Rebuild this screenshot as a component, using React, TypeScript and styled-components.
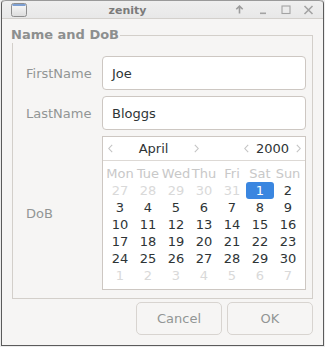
import React from "react";
import styled, { createGlobalStyle } from "styled-components";

const Global = createGlobalStyle`
  html, body { margin: 0; padding: 0; background: #ececec; }
  body { font-family: "DejaVu Sans", "Noto Sans", sans-serif; font-size: 13px; }
  * { box-sizing: border-box; }
`;

const Window = styled.div`
  margin-left: 1px;
  width: 323px;
  height: 346px;
  background: #f6f5f4;
  border: 1px solid #5b5b5b;
  border-top: none;
  border-radius: 4px 4px 0 0;
  display: flex;
  flex-direction: column;
  overflow: hidden;
`;

const TitleBar = styled.div`
  height: 19px;
  flex: none;
  display: flex;
  align-items: center;
  background: linear-gradient(#efefef, #e8e8e8);
  border-bottom: 1px solid #d3d0cc;
  border-top: 1px solid #9a9a9a;
  border-radius: 4px 4px 0 0;
  padding: 0 0 0 9px;
`;

const Title = styled.div`
  flex: 1;
  text-align: center;
  font-size: 11px;
  font-weight: bold;
  color: #7b7b7b;
  padding-top: 1px;
`;

const TitleButtons = styled.div`
  display: flex;
  align-items: center;
  height: 100%;
  padding-right: 3px;
`;

const TitleButton = styled.div`
  width: 23px;
  height: 17px;
  display: flex;
  align-items: center;
  justify-content: center;
`;

const Content = styled.div`
  flex: 1;
  display: flex;
  flex-direction: column;
  padding: 8px 10px 10px 10px;
`;

const Frame = styled.fieldset`
  margin: 0;
  padding: 0;
  border: 1px solid #d3cfca;
  width: 301px;
  min-width: 0;
`;

const Legend = styled.legend`
  padding: 0 1px 0 0;
  margin-left: -2px;
  font-weight: bold;
  font-size: 13px;
  line-height: 16px;
  color: #8d8f8f;
`;

const Form = styled.div`
  display: grid;
  grid-template-columns: 76px 204px;
  row-gap: 6px;
  align-items: center;
  padding: 13px 6px 8px 13px;
`;

const Label = styled.div`
  color: #929595;
  font-size: 13px;
`;

const Entry = styled.div`
  height: 34px;
  background: #ffffff;
  border: 1px solid #cdc7c2;
  border-radius: 4px;
  display: flex;
  align-items: center;
  padding-left: 9px;
  color: #2e3436;
  font-size: 13px;
`;

const Calendar = styled.div`
  height: 154px;
  background: #ffffff;
  border: 1px solid #cdc7c2;
  display: flex;
  flex-direction: column;
`;

const CalHeader = styled.div`
  height: 24px;
  flex: none;
  border-bottom: 1px solid #ddd9d5;
  display: flex;
  align-items: center;
  padding: 0 4px 0 5px;
  color: #2e3436;
`;

const MonthNav = styled.div`
  width: 91px;
  display: flex;
  justify-content: space-between;
  align-items: center;
`;

const YearNav = styled.div`
  margin-left: auto;
  display: flex;
  align-items: center;
  gap: 7px;
`;

const NavText = styled.span`
  font-size: 13px;
  color: #2e3436;
`;

const Grid = styled.div`
  display: grid;
  grid-template-columns: repeat(7, 28px);
  grid-auto-rows: 17.15px;
  padding: 3.5px 3px 0 3px;
`;

const Cell = styled.div<{ $kind: "head" | "other" | "day" | "sel" }>`
  display: flex;
  align-items: center;
  justify-content: center;
  font-size: 13px;
  border-radius: 3px;
  color: ${(p) =>
    p.$kind === "head"
      ? "#c8c8c8"
      : p.$kind === "other"
      ? "#d9d9d9"
      : p.$kind === "sel"
      ? "#ffffff"
      : "#2e3436"};
  background: ${(p) => (p.$kind === "sel" ? "#3a86e0" : "transparent")};
`;

const Buttons = styled.div`
  display: flex;
  justify-content: flex-end;
  gap: 5px;
  margin-top: 3px;
`;

const Button = styled.div`
  width: 86px;
  height: 33px;
  border: 1px solid #d8d4d0;
  border-radius: 5px;
  background: #f6f5f4;
  color: #929595;
  display: flex;
  align-items: center;
  justify-content: center;
  font-size: 13px;
`;

const Chevron = ({ dir }: { dir: "l" | "r" }) => (
  <svg width="5" height="9" viewBox="0 0 5 9">
    <path
      d={dir === "l" ? "M4.2 0.8 L0.8 4.5 L4.2 8.2" : "M0.8 0.8 L4.2 4.5 L0.8 8.2"}
      fill="none"
      stroke="#c4c4c4"
      strokeWidth="1.1"
    />
  </svg>
);

const WindowIcon = () => (
  <svg width="16" height="14" viewBox="0 0 16 14">
    <defs>
      <linearGradient id="wg" x1="0" y1="0" x2="0" y2="1">
        <stop offset="0" stopColor="#fbfbfb" />
        <stop offset="1" stopColor="#dcdcdc" />
      </linearGradient>
    </defs>
    <rect x="0.5" y="0.5" width="15" height="13" rx="2" fill="url(#wg)" stroke="#8e8e8e" />
    <rect x="1.5" y="1.3" width="13" height="1.4" fill="#4a7bc4" />
  </svg>
);

const days: { n: number; k: "other" | "day" | "sel" }[] = [
  ...[27, 28, 29, 30, 31].map((n) => ({ n, k: "other" as const })),
  { n: 1, k: "sel" },
  ...Array.from({ length: 29 }, (_, i) => ({ n: i + 2, k: "day" as const })),
  ...[1, 2, 3, 4, 5, 6, 7].map((n) => ({ n, k: "other" as const })),
];

const heads = ["Mon", "Tue", "Wed", "Thu", "Fri", "Sat", "Sun"];

export default function App() {
  return (
    <>
      <Global />
      <Window>
        <TitleBar>
          <WindowIcon />
          <Title>zenity</Title>
          <TitleButtons>
            <TitleButton>
              <svg width="9" height="9" viewBox="0 0 9 9">
                <path d="M4.5 1 L4.5 8.5 M1.3 4.3 L4.5 1.1 L7.7 4.3" fill="none" stroke="#9c9c9c" strokeWidth="1.6" />
              </svg>
            </TitleButton>
            <TitleButton>
              <svg width="8" height="10" viewBox="0 0 8 10">
                <rect x="1" y="7.5" width="6" height="1.6" fill="#a3a3a3" />
              </svg>
            </TitleButton>
            <TitleButton>
              <svg width="10" height="10" viewBox="0 0 10 10">
                <rect x="1" y="1" width="8" height="7.5" fill="none" stroke="#a3a3a3" strokeWidth="1.1" />
              </svg>
            </TitleButton>
            <TitleButton>
              <svg width="11" height="10" viewBox="0 0 11 10">
                <path d="M1.5 1 L9.5 9 M9.5 1 L1.5 9" stroke="#a3a3a3" strokeWidth="1.6" />
              </svg>
            </TitleButton>
          </TitleButtons>
        </TitleBar>
        <Content>
          <Frame>
            <Legend>Name and DoB</Legend>
            <Form>
              <Label>FirstName</Label>
              <Entry>Joe</Entry>
              <Label>LastName</Label>
              <Entry>Bloggs</Entry>
              <Label>DoB</Label>
              <Calendar>
                <CalHeader>
                  <MonthNav>
                    <Chevron dir="l" />
                    <NavText>April</NavText>
                    <Chevron dir="r" />
                  </MonthNav>
                  <YearNav>
                    <Chevron dir="l" />
                    <NavText>2000</NavText>
                    <Chevron dir="r" />
                  </YearNav>
                </CalHeader>
                <Grid>
                  {heads.map((h) => (
                    <Cell key={h} $kind="head">
                      {h}
                    </Cell>
                  ))}
                  {days.map((d, i) => (
                    <Cell key={i} $kind={d.k}>
                      {d.n}
                    </Cell>
                  ))}
                </Grid>
              </Calendar>
            </Form>
          </Frame>
          <Buttons>
            <Button>Cancel</Button>
            <Button>OK</Button>
          </Buttons>
        </Content>
      </Window>
    </>
  );
}
